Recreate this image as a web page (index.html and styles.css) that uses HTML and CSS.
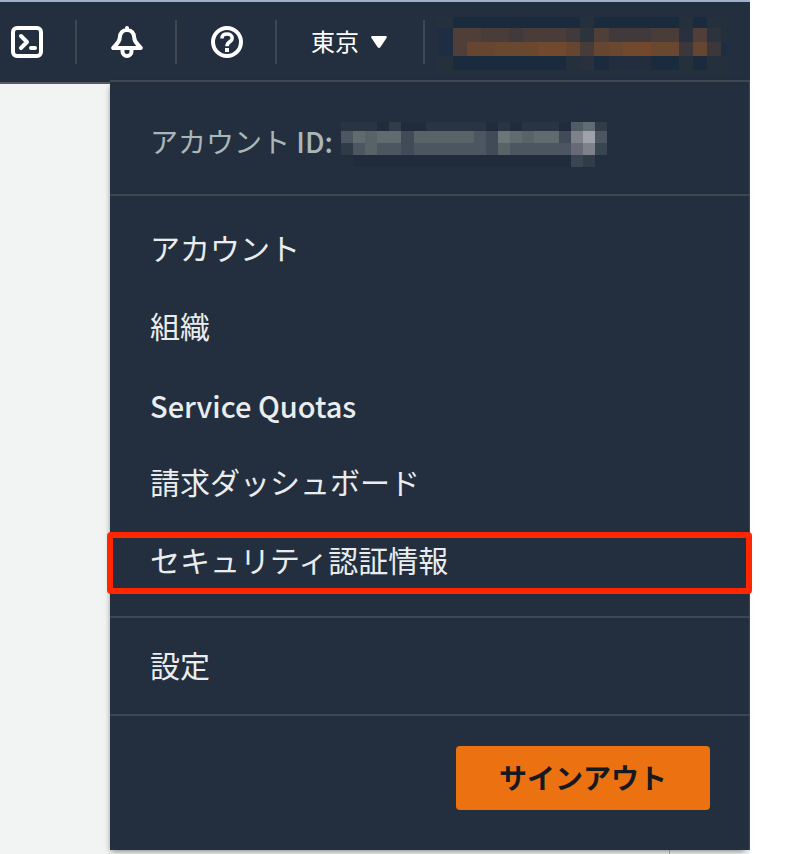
FILE: index.html
```html
<!DOCTYPE html>
<html lang="ja">
<head>
    <meta charset="UTF-8">
    <meta name="viewport" content="width=device-width, initial-scale=1.0">
    <title>アカウントメニュー</title>
    <link rel="stylesheet" href="styles.css">
</head>
<body>
    <div class="console">
        <header class="topbar">
            <button type="button" class="nav-item nav-first" aria-label="CloudShell">
                <svg class="icon" viewBox="0 0 32 32" fill="none" stroke="#fff" stroke-width="4" stroke-linecap="round" stroke-linejoin="round">
                    <rect x="2" y="2" width="28" height="28" rx="4"/>
                    <path d="M10 10l6 6-6 6"/>
                    <path d="M20 22h4"/>
                </svg>
            </button>
            <button type="button" class="nav-item" aria-label="通知">
                <svg class="icon" viewBox="0 0 32 32" fill="none" stroke="#fff" stroke-width="4" stroke-linecap="round" stroke-linejoin="round">
                    <path d="M16 2v2M16 4c-4.500 0-7 3.200-7.200 7.500C8.600 17 5 18 2.200 22h27.600c-2.800-4-6.400-5-6.600-10.500C23 7.200 20.500 4 16 4z"/>
                    <path d="M11.500 23v2.500a4.500 4.500 0 0 0 9 0V23"/>
                </svg>
            </button>
            <button type="button" class="nav-item" aria-label="ヘルプ">
                <svg class="icon" viewBox="0 0 32 32" fill="none" stroke="#fff" stroke-width="4">
                    <circle cx="16" cy="16" r="14"/>
                    <path d="M11 12.500V12c0-2.600 2-4 5-4s5.200 1.500 5.200 4.200c0 3.800-5.200 3.500-5.200 8" stroke-width="3.600"/>
                    <path d="M16 22v4"/>
                </svg>
            </button>
            <button type="button" class="nav-item region">
                <span>東京</span>
                <svg class="caret" viewBox="0 0 16 12" fill="#fff"><path d="M1 0h14q1.500.5.500 2L9.500 11q-1.500 1.800-3 0L.5 2Q-.5.5 1 0z"/></svg>
            </button>
            <button type="button" class="user" aria-label="ユーザー" aria-expanded="true">
                <svg class="user-mask" viewBox="437 17 290 57" shape-rendering="crispEdges">
                    <path fill="#24303b" d="M437 17h290v57H437z"/>
                    <path fill="#1b2b3e" d="M453 17h127v11H453zM594 17h85v11h-85zM693 17h14v11h-14zM453 56h113v14H453zM594 56h15v14h-15zM651 56h28v14h-28zM693 56h14v14h-14z"/>
                    <path fill="#1e2d42" d="M438 28h15v28h-15zM721 42h6v14h-6z"/>
                    <path fill="#222e3e" d="M609 56h42v14h-42z"/>
                    <path fill="#2b303e" d="M580 56h14v14h-14zM679 28h14v14h-14z"/>
                    <path fill="#503f38" d="M453 28h14v28h-14zM467 28h14v14h-14zM594 28h15v14h-15zM693 28h14v14h-14z"/>
                    <path fill="#493c39" d="M481 28h28v14h-28zM523 28h43v14h-43zM651 28h28v14h-28z"/>
                    <path fill="#403a3c" d="M509 28h14v14h-14zM566 28h14v14h-14zM609 28h42v14h-42z"/>
                    <path fill="#2c333d" d="M580 28h14v14h-14zM707 28h14v14h-14z"/>
                    <path fill="#664630" d="M467 42h28v14h-28zM566 42h14v14h-14zM594 42h15v14h-15zM693 42h14v14h-14z"/>
                    <path fill="#6a472f" d="M495 42h43v14h-43zM609 42h14v14h-14zM651 42h28v14h-28z"/>
                    <path fill="#70492e" d="M538 42h28v14h-28zM623 42h14v14h-14z"/>
                    <path fill="#75482e" d="M637 42h14v14h-14z"/>
                    <path fill="#473c38" d="M580 42h14v14h-14z"/>
                    <path fill="#3b373a" d="M679 42h14v14h-14zM707 42h14v14h-14z"/>
                </svg>
            </button>
        </header>

        <main class="page">
            <div class="page-content"></div>
        </main>

        <nav class="menu" aria-label="アカウントメニュー">
            <div class="account-id">
                <span>アカウント <span class="latin">ID:</span></span>
                <svg class="id-mask" viewBox="0 0 22 45" preserveAspectRatio="none" shape-rendering="crispEdges">
                    <path fill="#283442" d="M0 0h22v9H0z"/>
                    <path fill="#202c3c" d="M3 0h1v9H3zM5 0h2v9H5zM12 0h1v9h-1zM14 0h1v9h-1zM18 0h1v9h-1zM1 33h18v12H1z"/>
                    <path fill="#303c48" d="M4 0h1v9H4zM21 0h1v9h-1zM20 33h1v12h-1z"/>
                    <path fill="#4b5660" d="M0 9h1v12H0zM11 9h1v12h-1zM21 9h1v12h-1zM1 21h1v12H1zM3 21h2v12H3zM6 21h6v12H6zM14 21h5v12h-5z"/>
                    <path fill="#586368" d="M2 9h1v24H2zM6 9h5v12H6zM13 21h1v12h-1zM15 9h1v12h-1z"/>
                    <path fill="#606b70" d="M1 9h1v12H1zM3 9h2v12H3zM14 9h1v12h-1zM16 9h2v12h-2z"/>
                    <path fill="#6b7679" d="M13 9h1v12h-1z"/>
                    <path fill="#404b57" d="M5 9h1v24H5zM12 9h1v24h-1zM18 9h1v12h-1z"/>
                    <path fill="#303b48" d="M0 21h1v12H0z"/>
                    <path fill="#505b64" d="M19 0h1v9h-1z"/>
                    <path fill="#606b73" d="M20 0h1v9h-1z"/>
                    <path fill="#7d828a" d="M19 9h1v12h-1zM20 21h1v12h-1z"/>
                    <path fill="#9da3a9" d="M20 9h1v12h-1z"/>
                    <path fill="#686b77" d="M19 21h1v12h-1z"/>
                    <path fill="#3a4552" d="M19 33h1v12h-1zM21 21h1v12h-1z"/>
                </svg>
            </div>
            <ul class="menu-list">
                <li><a href="#">アカウント</a></li>
                <li><a href="#">組織</a></li>
                <li><a href="#" class="latin latin-item">Service Quotas</a></li>
                <li><a href="#">請求ダッシュボード</a></li>
                <li class="highlight"><a href="#">セキュリティ認証情報</a></li>
            </ul>
            <a href="#" class="settings">設定</a>
            <div class="menu-footer">
                <button type="button" class="signout">サインアウト</button>
            </div>
        </nav>
    </div>
</body>
</html>
```

FILE: styles.css
```css
* {
    box-sizing: border-box;
}
body {
    margin: 0;
    background: #fff;
    font-family: "Noto Sans CJK JP", sans-serif;
}
button {
    margin: 0;
    border: 0;
    background: none;
    font-family: inherit;
    cursor: pointer;
}
a {
    color: inherit;
    text-decoration: none;
}
.console {
    position: relative;
    display: flex;
    flex-direction: column;
    min-height: 100vh;
    margin-right: 44px;
}

/* Top bar */
.topbar {
    display: flex;
    align-items: center;
    height: 84px;
    border-top: 2px solid #9fb0ca;
    border-bottom: 2px solid #545b64;
    background: #232f3e;
}
.nav-item {
    display: flex;
    align-items: center;
    height: 44px;
    padding: 0 32px 0 34px;
    border-right: 2px solid #414750;
}
.nav-first {
    padding-left: 11px;
}
.icon {
    display: block;
    width: 32px;
    height: 32px;
}
.region {
    gap: 12px;
    padding-right: 36px;
    color: #fff;
    font-size: 24px;
    line-height: 32px;
}
.region span {
    padding-bottom: 2px;
}
.caret {
    width: 16px;
    height: 12px;
}
.user {
    display: flex;
    padding: 6px 0 0 12px;
}
.user-mask {
    width: 290px;
    height: 57px;
}

/* Page behind the menu */
.page {
    display: flex;
    flex: 1;
    background: #f2f4f3;
}
.page-content {
    flex: 1;
    margin-right: 80px;
    border-right: 1px solid #aab7b8;
}

/* Account menu */
.menu {
    position: absolute;
    top: 80px;
    right: 0;
    left: 110px;
    border-top: 2px solid #414750;
    border-right: 1px solid #414750;
    background: #232f3e;
    color: #eaeded;
    font-size: 30px;
    line-height: 40px;
    box-shadow: -2px 4px 6px -3px rgba(0, 0, 0, 0.5);
}
.account-id {
    display: flex;
    align-items: center;
    gap: 8px;
    height: 114px;
    padding: 5px 40px 0;
    border-bottom: 2px solid #414750;
    color: #aab7b8;
    font-size: 28px;
}
.id-mask {
    width: 266px;
    height: 45px;
    margin-top: 8px;
}
.menu-list {
    margin: 0;
    padding: 14px 0 16px;
    border-bottom: 2px solid #414750;
    list-style: none;
}
.menu-list a {
    display: block;
    padding: 17px 40px 21px;
}
.latin {
    font-weight: 500;
}
.menu-list .latin-item {
    padding: 19px 40px;
    font-size: 29px;
}
.highlight {
    position: relative;
}
.highlight::after {
    content: "";
    position: absolute;
    inset: 10px -3px 6px;
    border: 6px solid #ff2600;
    border-radius: 4px;
    pointer-events: none;
}
.settings {
    display: block;
    padding: 26px 40px 30px;
    border-bottom: 2px solid #414750;
}
.menu-footer {
    display: flex;
    justify-content: flex-end;
    padding: 30px 39px 40px;
}
.signout {
    height: 64px;
    padding: 0 43px 3px;
    border-radius: 4px;
    background: #ec7211;
    color: #16191f;
    font-size: 28px;
    font-weight: 700;
    line-height: 40px;
}
```
